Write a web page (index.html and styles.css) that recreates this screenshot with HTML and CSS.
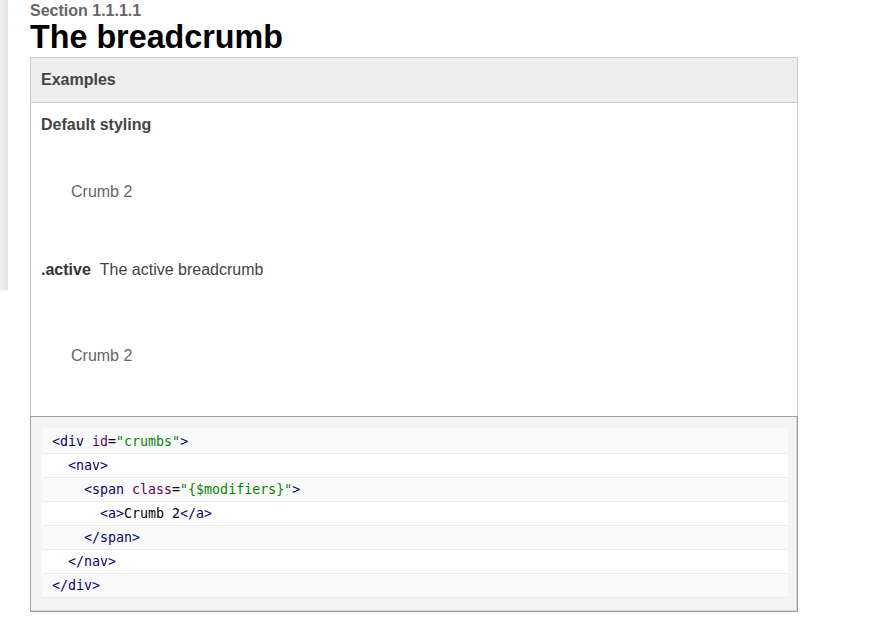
FILE: index.html
```html
<!DOCTYPE html>
<html>
<head>
<meta charset="utf-8">
<link rel="stylesheet" href="styles.css">
</head>
<body>
<div class="page">
  <div class="sidebar"></div>
  <main class="main">
    <div class="section-ref">Section 1.1.1.1</div>
    <h1 class="title">The breadcrumb</h1>
    <div class="panel">
      <div class="panel-head">Examples</div>
      <div class="panel-body">
        <h3 class="mod-title">Default styling</h3>
        <div class="example"><nav class="crumbs"><span class="crumb"><a>Crumb 2</a></span></nav></div>
        <div class="mod-row"><span class="mod-name">.active</span><span class="mod-desc">The active breadcrumb</span></div>
        <div class="example example-active"><nav class="crumbs"><span class="crumb active"><a>Crumb 2</a></span></nav></div>
      </div>
      <div class="code-wrap">
        <ol class="code">
          <li class="row"><span class="tag">&lt;div</span> <span class="atn">id</span>=<span class="atv">"crumbs"</span><span class="tag">&gt;</span></li>
          <li class="row"><span class="ind1"></span><span class="tag">&lt;nav&gt;</span></li>
          <li class="row"><span class="ind2"></span><span class="tag">&lt;span</span> <span class="atn">class</span>=<span class="atv">"{$modifiers}"</span><span class="tag">&gt;</span></li>
          <li class="row"><span class="ind3"></span><span class="tag">&lt;a&gt;</span>Crumb 2<span class="tag">&lt;/a&gt;</span></li>
          <li class="row"><span class="ind2"></span><span class="tag">&lt;/span&gt;</span></li>
          <li class="row"><span class="ind1"></span><span class="tag">&lt;/nav&gt;</span></li>
          <li class="row"><span class="tag">&lt;/div&gt;</span></li>
        </ol>
      </div>
    </div>
  </main>
</div>
</body>
</html>
```
FILE: styles.css
```css
html, body {
  margin: 0;
  padding: 0;
  background: #fff;
}
body {
  font-family: "Liberation Sans", Arial, sans-serif;
  color: #444;
}
.page {
  display: flex;
  align-items: flex-start;
}
.sidebar {
  width: 8px;
  height: 290px;
  flex: none;
  background: linear-gradient(to right, #f1f1f1, #e1e1e1);
}
.main {
  margin-left: 22px;
  width: 768px;
}
.section-ref {
  margin-top: 2px;
  font-size: 16px;
  line-height: 18px;
  font-weight: bold;
  color: #666;
}
.title {
  margin: 0;
  font-size: 32.3px;
  line-height: 34px;
  font-weight: bold;
  color: #000;
}
.panel {
  margin-top: 3px;
  border: 1px solid #ccc;
  border-bottom: none;
}
.panel-head {
  background: #ededed;
  border-bottom: 1px solid #ccc;
  padding: 12px 10px;
  font-size: 16px;
  line-height: 20px;
  font-weight: bold;
  color: #444;
}
.panel-body {
  padding: 12px 10px 0;
}
.mod-title {
  margin: 0;
  font-size: 16px;
  line-height: 20px;
  font-weight: bold;
  color: #444;
}
.example {
  padding: 47px 0 0 30px;
  height: 125px;
  box-sizing: border-box;
  font-size: 16px;
  line-height: 20px;
  color: #666;
}
.example-active {
  padding-top: 66px;
  height: 136px;
}
.crumbs {
  display: block;
}
.mod-row {
  font-size: 16px;
  line-height: 20px;
  display: flex;
  gap: 9px;
}
.mod-name {
  font-weight: bold;
  color: #333;
}
.mod-desc {
  color: #444;
}
.code-wrap {
  margin: 0 -1px;
  border: 1px solid #9f9f9f;
  box-shadow: inset -1px -1px 0 #d6d6d6;
  background: #f4f4f4;
  padding: 11px 9px 13px 11px;
}
.code {
  list-style: none;
  margin: 0;
  padding: 2px 0 0;
  font-family: "DejaVu Sans Mono", monospace;
  font-size: 13.3px;
  color: #000;
  background: #fafafa;
}
.row {
  height: 23px;
  line-height: 23px;
  border-bottom: 1px solid #ececec;
  padding-left: 10px;
  white-space: pre;
  background: #fafafa;
}
.row:nth-child(even) {
  background: #fff;
}
.ind1 { display: inline-block; width: 16px; }
.ind2 { display: inline-block; width: 32px; }
.ind3 { display: inline-block; width: 48px; }
.tag { color: #000088; }
.atn { color: #660066; }
.atv { color: #008800; }
```
